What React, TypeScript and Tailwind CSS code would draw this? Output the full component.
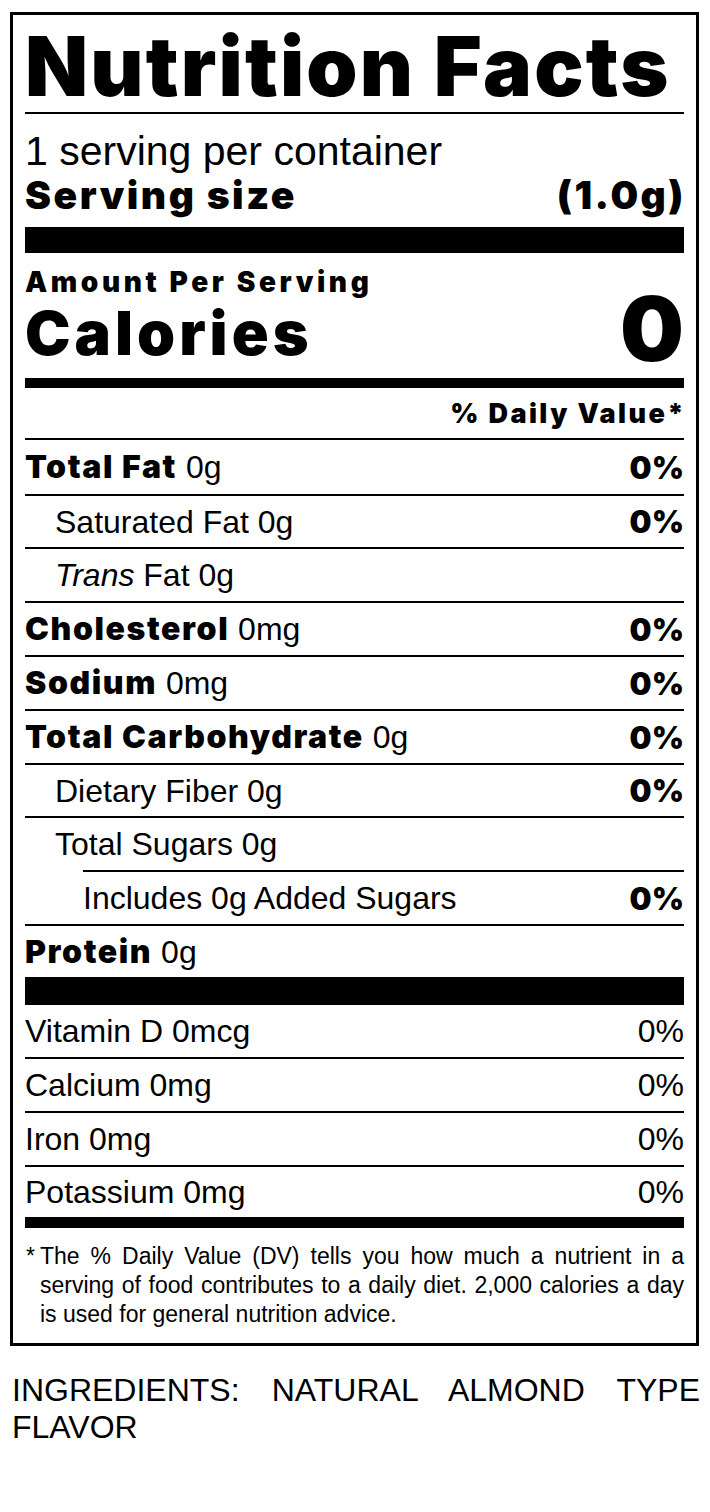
import React from 'react';

const heavy = "font-['Inter','Liberation_Sans',sans-serif] font-black";
const plain = "font-['Liberation_Sans','Arial',sans-serif] font-normal";

type Row = {
  bold?: string;
  label: React.ReactNode;
  dv?: string;
  indent?: 0 | 1 | 2;
  h: string;
  lineIndent?: boolean;
};

const nutrients: Row[] = [
  { bold: 'Total Fat', label: '0g', dv: '0%', h: 'h-[56px]' },
  { label: 'Saturated Fat 0g', dv: '0%', indent: 1, h: 'h-[53px]' },
  {
    label: (
      <>
        <i>Trans</i> Fat 0g
      </>
    ),
    indent: 1,
    h: 'h-[54px]',
  },
  { bold: 'Cholesterol', label: '0mg', dv: '0%', h: 'h-[54px]' },
  { bold: 'Sodium', label: '0mg', dv: '0%', h: 'h-[54px]' },
  { bold: 'Total Carbohydrate', label: '0g', dv: '0%', h: 'h-[54px]' },
  { label: 'Dietary Fiber 0g', dv: '0%', indent: 1, h: 'h-[53px]' },
  { label: 'Total Sugars 0g', indent: 1, h: 'h-[54px]' },
  { label: 'Includes 0g Added Sugars', dv: '0%', indent: 2, h: 'h-[54px]', lineIndent: true },
  { bold: 'Protein', label: '0g', h: 'h-[53px]' },
];

const vitamins = [
  { label: 'Vitamin D 0mcg', h: 'h-[52px]', top: false },
  { label: 'Calcium 0mg', h: 'h-[54px]', top: true },
  { label: 'Iron 0mg', h: 'h-[54px]', top: true },
  { label: 'Potassium 0mg', h: 'h-[52px]', top: true },
];

const NutrientRow: React.FC<{ row: Row }> = ({ row }) => (
  <div
    className={`flex items-center justify-between border-t-2 border-black ${row.h} ${
      row.lineIndent ? 'ml-[58px]' : ''
    }`}
  >
    <span
      className={`text-[32px] leading-none ${plain} ${
        row.indent === 1 ? 'pl-[30px]' : ''
      }`}
    >
      {row.bold && <span className={`${heavy} text-[32px] tracking-[1.6px]`}>{row.bold}</span>}
      {row.bold && ' '}
      {row.label}
    </span>
    {row.dv && <span className={`${heavy} text-[31px] leading-none`}>{row.dv}</span>}
  </div>
);

export default function App() {
  return (
    <div className="h-[1512px] w-[710px] overflow-hidden bg-white pl-[10px] pt-[12px] text-black">
      <div className="w-[689px] border-[3px] border-black px-[12px]">
        {/* header */}
        <div className="flex h-[97px] items-center pt-[6px]">
          <h1 className={`${heavy} text-[82px] leading-none tracking-[2.2px]`}>Nutrition Facts</h1>
        </div>
        <div className="h-[2px] bg-black" />
        <div className="h-[113px] pt-[16px]">
          <p className={`${plain} text-[41px] leading-[43px]`}>1 serving per container</p>
          <div className={`${heavy} flex justify-between text-[39px] leading-[43px] tracking-[2.5px]`}>
            <span>Serving size</span>
            <span className="-mr-[2px]">(1.0g)</span>
          </div>
        </div>
        <div className="h-[26px] bg-black" />

        {/* calories */}
        <div className="h-[125px] pt-[15px]">
          <p className={`${heavy} text-[28px] leading-[28px] tracking-[3.6px]`}>Amount Per Serving</p>
          <div className="flex h-[82px] items-center justify-between">
            <span className={`${heavy} mb-[8px] text-[61px] leading-none tracking-[4px]`}>Calories</span>
            <span className={`${heavy} mb-[17px] text-[90px] leading-none`}>0</span>
          </div>
        </div>
        <div className="h-[10px] bg-black" />
        <div className="flex h-[50px] items-center justify-end">
          <span className={`${heavy} -mr-[2px] text-[27px] leading-none tracking-[2.4px]`}>% Daily Value*</span>
        </div>

        {nutrients.map((row, i) => (
          <NutrientRow key={i} row={row} />
        ))}
        <div className="h-[28px] bg-black" />

        {vitamins.map((v) => (
          <div
            key={v.label}
            className={`flex items-center justify-between ${v.h} ${v.top ? 'border-t-2 border-black' : ''} ${plain} text-[32px] leading-none`}
          >
            <span>{v.label}</span>
            <span>0%</span>
          </div>
        ))}
        <div className="h-[11px] bg-black" />

        {/* footnote */}
        <p className={`${plain} relative pb-[14px] pl-[15px] pt-[14px] text-justify text-[23px] leading-[29px]`}>
          <span className="absolute left-[1px] top-[14px]">*</span>
          The % Daily Value (DV) tells you how much a nutrient in a serving of food contributes to a daily diet.
          2,000 calories a day is used for general nutrition advice.
        </p>
      </div>

      <p className={`${plain} ml-[2px] mt-[26px] w-[688px] text-justify text-[32px] leading-[37px]`}>
        INGREDIENTS: NATURAL ALMOND TYPE FLAVOR
      </p>
    </div>
  );
}
